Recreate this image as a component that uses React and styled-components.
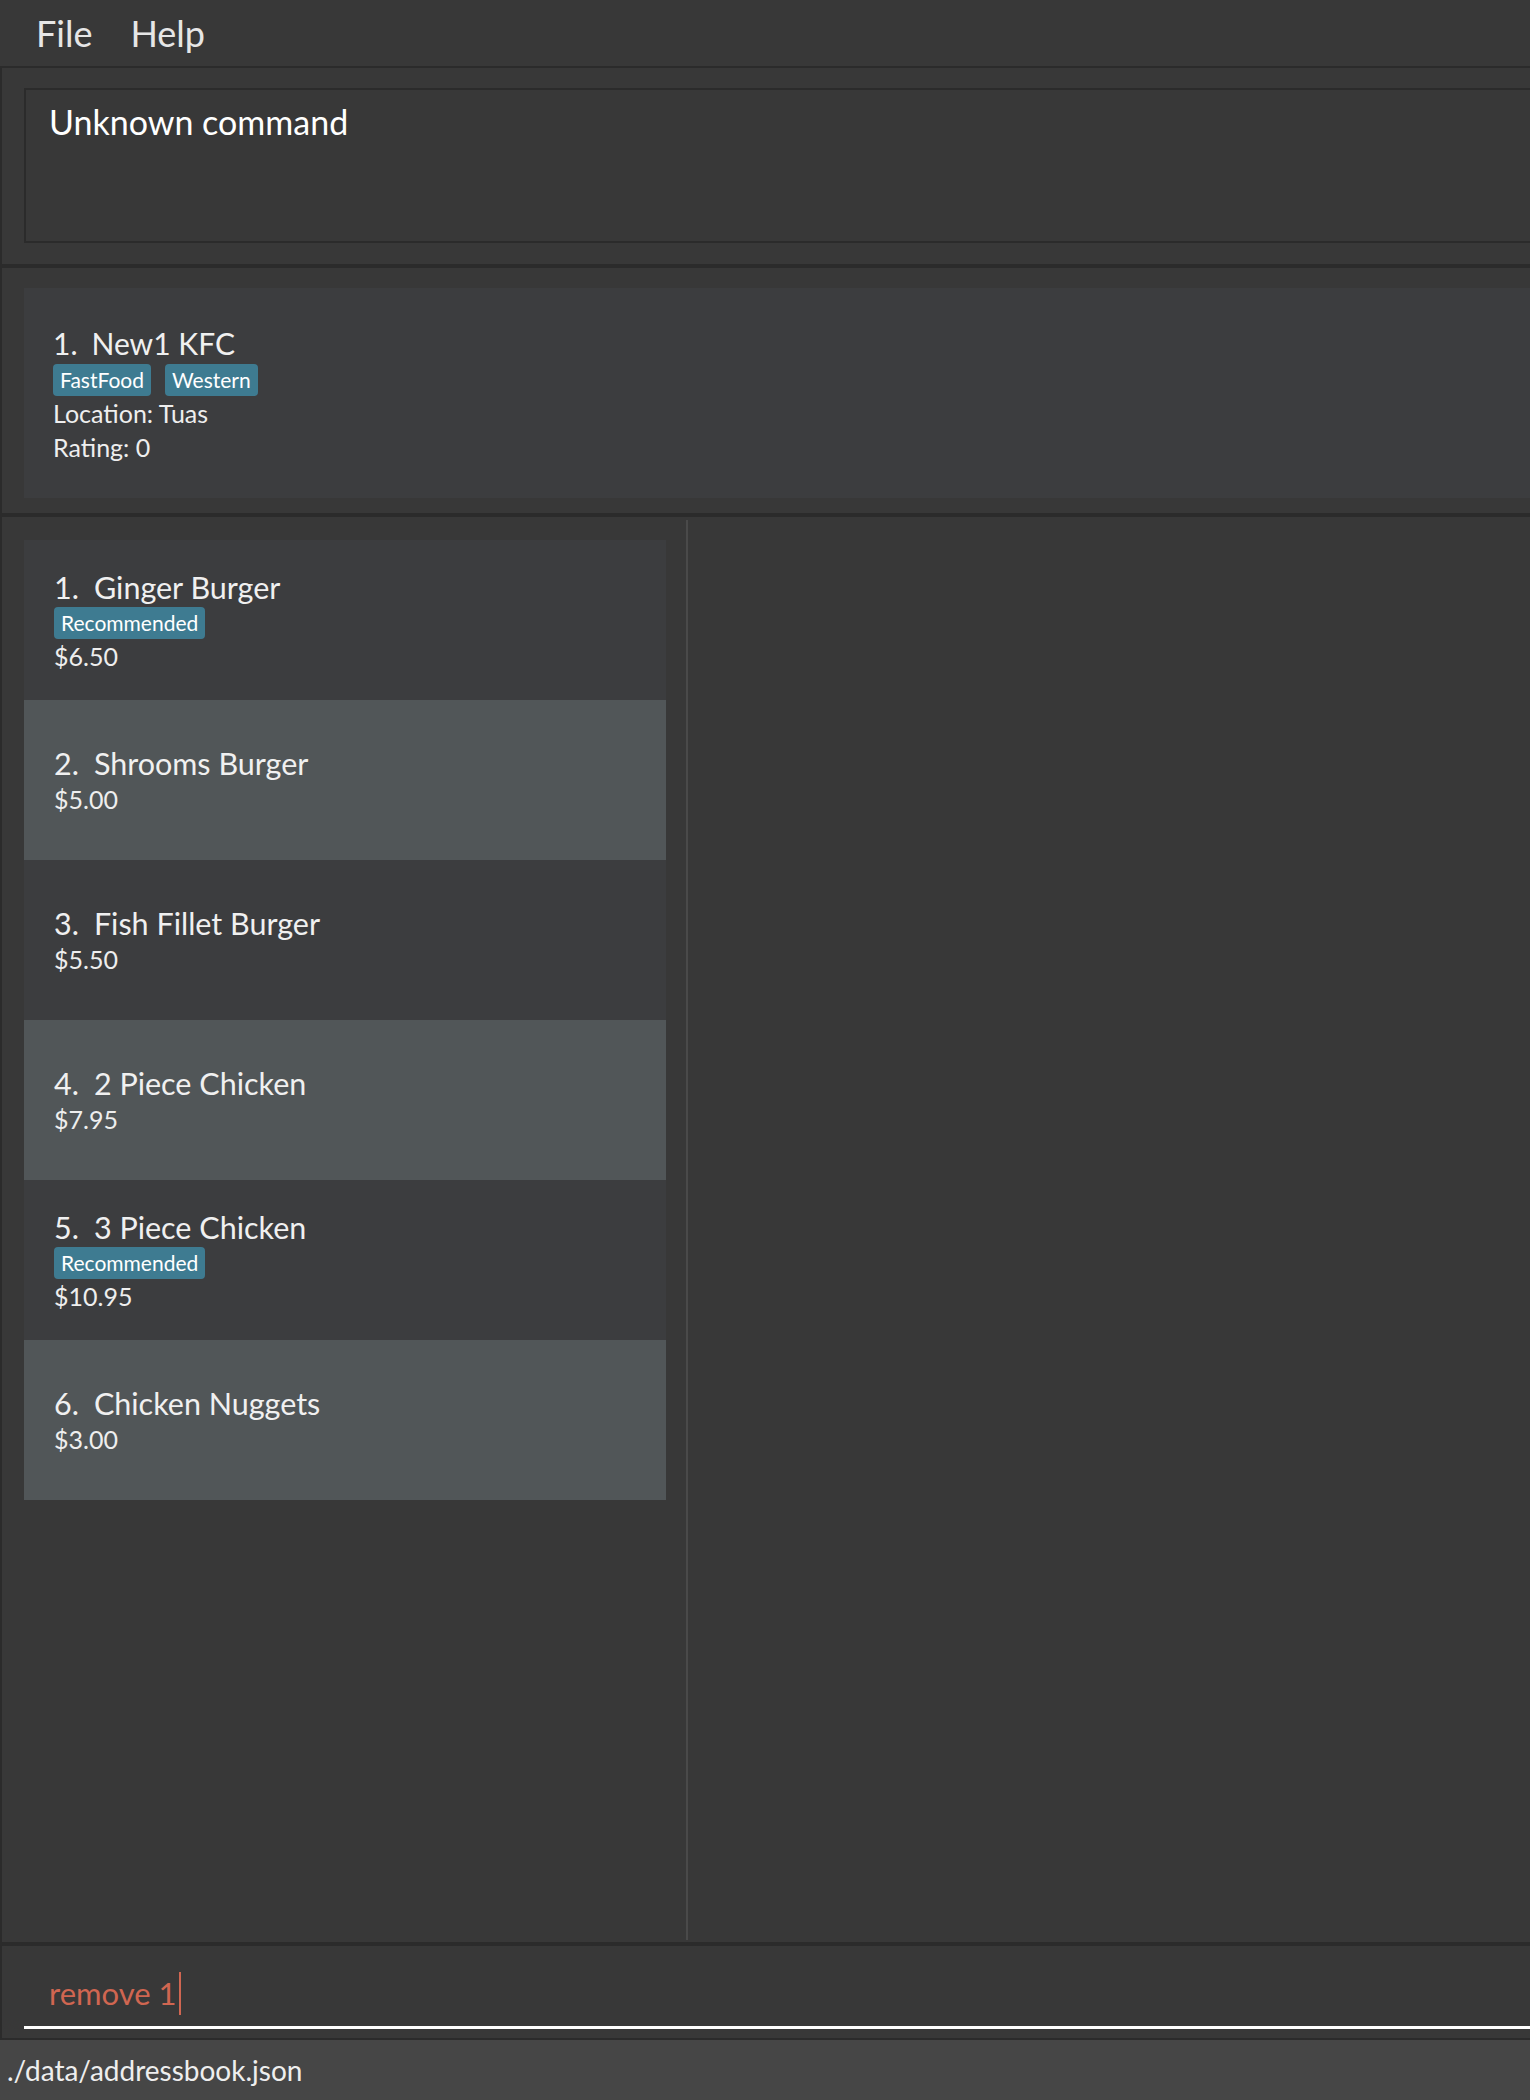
import React from 'react'
import styled, { createGlobalStyle } from 'styled-components'

const GlobalStyle = createGlobalStyle`
  html, body {
    margin: 0;
    padding: 0;
    background: #383838;
  }
  * {
    box-sizing: border-box;
  }
`

const Page = styled.div`
  width: 1530px;
  height: 2100px;
  display: flex;
  flex-direction: column;
  background: #383838;
  font-family: Lato, "Open Sans", sans-serif;
  color: #eeeeee;
  overflow: hidden;
`

const MenuBar = styled.div`
  height: 68px;
  flex-shrink: 0;
  display: flex;
  align-items: center;
  gap: 38px;
  padding-left: 36px;
  border-bottom: 2px solid #2b2b2b;
  font-size: 36px;
  color: #e6e6e6;
`

const MenuItem = styled.span`
  line-height: 1;
`

const Panel = styled.div`
  flex-shrink: 0;
  height: ${p => p.$height}px;
  border-left: 2px solid #2b2b2b;
  border-bottom: ${p => p.$bottom}px solid #2b2b2b;
  padding: ${p => p.$pad};
  display: flex;
  flex-direction: column;
`

const ResultBox = styled.div`
  height: 155px;
  border: 2px solid #2b2b2b;
  border-right: none;
  padding: 12px 0 0 23px;
  font-size: 34px;
  line-height: 1.2;
  color: #ffffff;
`

const RestaurantCard = styled.div`
  height: 210px;
  background: #3c3d3f;
  padding-left: 29px;
  display: flex;
  flex-direction: column;
  justify-content: center;
`

const TitleRow = styled.div`
  display: flex;
  gap: ${p => p.$gap}px;
  font-size: ${p => p.$size}px;
  line-height: ${p => p.$lh}px;
  color: #f0f0f0;
`

const TagRow = styled.div`
  display: flex;
  gap: 14px;
  margin-top: 1px;
`

const Tag = styled.span`
  height: 32px;
  display: inline-flex;
  align-items: center;
  padding: 0 7px;
  border-radius: 4px;
  background: #3e7b91;
  color: #ffffff;
  font-size: 21px;
`

const SmallLabel = styled.div`
  font-size: 25px;
  line-height: 34px;
  color: #eeeeee;
`

const Split = styled.div`
  flex: 1;
  display: flex;
  border-bottom: 4px solid #2b2b2b;
  min-height: 0;
`

const ListPane = styled.div`
  width: 686px;
  flex-shrink: 0;
  border-left: 2px solid #2b2b2b;
  padding: 23px 20px 0 22px;
  display: flex;
  flex-direction: column;
`

const Divider = styled.div`
  width: 2px;
  margin: 3px 0 2px;
  background: #4a4a4a;
`

const RightPane = styled.div`
  flex: 1;
`

const ItemCard = styled.div`
  height: 160px;
  background: ${p => (p.$odd ? '#515658' : '#3c3d3f')};
  padding-left: 30px;
  display: flex;
  flex-direction: column;
  justify-content: center;
`

const CommandPanel = styled.div`
  height: 94px;
  flex-shrink: 0;
  border-left: 2px solid #2b2b2b;
  border-bottom: 2px solid #2b2b2b;
  padding: 20px 0 0 22px;
`

const CommandBox = styled.div`
  height: 63px;
  border-bottom: 3px solid #ffffff;
  padding: 0 0 6px 25px;
  display: flex;
  align-items: center;
  font-size: 31px;
  color: #d06651;
`

const Caret = styled.span`
  width: 2px;
  height: 43px;
  margin-left: 2px;
  background: #d06651;
`

const StatusBar = styled.div`
  height: 60px;
  flex-shrink: 0;
  background: #464646;
  padding-left: 7px;
  display: flex;
  align-items: center;
  font-size: 28px;
  color: #eeeeee;
`

const items = [
  { name: 'Ginger Burger', price: '$6.50', tags: ['Recommended'] },
  { name: 'Shrooms Burger', price: '$5.00', tags: [] },
  { name: 'Fish Fillet Burger', price: '$5.50', tags: [] },
  { name: '2 Piece Chicken', price: '$7.95', tags: [] },
  { name: '3 Piece Chicken', price: '$10.95', tags: ['Recommended'] },
  { name: 'Chicken Nuggets', price: '$3.00', tags: [] },
]

export default function App() {
  return (
    <>
      <GlobalStyle />
      <Page>
        <MenuBar>
          <MenuItem>File</MenuItem>
          <MenuItem>Help</MenuItem>
        </MenuBar>

        <Panel $height={200} $bottom={4} $pad="20px 0 0 22px">
          <ResultBox>Unknown command</ResultBox>
        </Panel>

        <Panel $height={249} $bottom={4} $pad="20px 0 0 22px">
          <RestaurantCard>
            <TitleRow $gap={14} $size={30} $lh={40}>
              <span>1.</span>
              <span>New1 KFC</span>
            </TitleRow>
            <TagRow>
              <Tag>FastFood</Tag>
              <Tag>Western</Tag>
            </TagRow>
            <SmallLabel>Location: Tuas</SmallLabel>
            <SmallLabel>Rating: 0</SmallLabel>
          </RestaurantCard>
        </Panel>

        <Split>
          <ListPane>
            {items.map((item, i) => (
              <ItemCard key={item.name} $odd={i % 2 === 1}>
                <TitleRow $gap={15} $size={30.5} $lh={38}>
                  <span>{i + 1}.</span>
                  <span>{item.name}</span>
                </TitleRow>
                {item.tags.length > 0 && (
                  <TagRow>
                    {item.tags.map(t => (
                      <Tag key={t}>{t}</Tag>
                    ))}
                  </TagRow>
                )}
                <SmallLabel>{item.price}</SmallLabel>
              </ItemCard>
            ))}
          </ListPane>
          <Divider />
          <RightPane />
        </Split>

        <CommandPanel>
          <CommandBox>
            remove 1
            <Caret />
          </CommandBox>
        </CommandPanel>

        <StatusBar>./data/addressbook.json</StatusBar>
      </Page>
    </>
  )
}
